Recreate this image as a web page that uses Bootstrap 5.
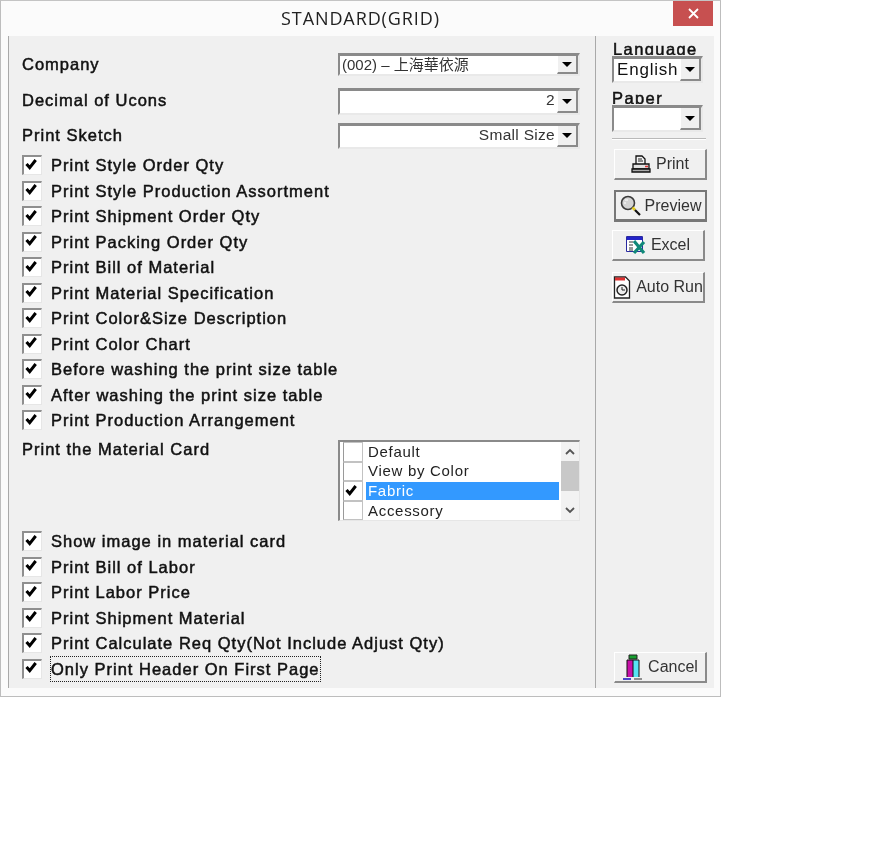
<!DOCTYPE html>
<html lang="en">

<head>
    <meta charset="UTF-8">
    <meta name="viewport" content="width=device-width, initial-scale=1.0">
    <link href="https://cdn.jsdelivr.net/npm/bootstrap@5.3.3/dist/css/bootstrap.min.css" rel="stylesheet">
    <title>STANDARD(GRID)</title>

    <style>
        body {
            background: #fff;
            color: #111;
            font-family: "Liberation Sans", "Noto Sans CJK TC", sans-serif;
            font-size: 16px;
        }

        .dlg-window {
            width: 721px;
            height: 697px;
            border: 1px solid #bdbdbd;
            border-top-color: #c4c4c4;
            background: #fbfbfb;
            filter: blur(.3px);
        }

        .dlg-title {
            height: 35px;
            font-family: "Open Sans", sans-serif;
            font-size: 18px;
            letter-spacing: .9px;
            line-height: 24px;
            color: #222;
            padding-top: 5px;
        }

        .dlg-close {
            top: 0;
            right: 7px;
            width: 40px;
            height: 25px;
            background: #c75050;
        }

        .dlg-panel {
            margin: 0 6px 0 7px;
            height: 652px;
            background: #f0f0f0;
            border-left: 1px solid #a9a9a9;
        }

        .dlg-main {
            width: 587px;
            border-right: 1px solid #a9a9a9;
            padding: 17px 15px 0 13px;
            flex: none;
        }

        .dlg-side {
            padding-top: 7px;
            padding-bottom: 5px;
            flex: 1;
            min-width: 0;
        }

        .ui-text {
            font-size: 16.5px;
            letter-spacing: 1px;
            -webkit-text-stroke: .5px #111;
            white-space: nowrap;
        }

        .field-row {
            display: flex;
            justify-content: space-between;
            align-items: center;
        }

        .row-company { height: 23px; }
        .row-decimal { height: 27px; margin-top: 12px; }
        .row-decimal .ui-text { margin-top: -2px; }
        .row-sketch { height: 26px; margin-top: 8px; margin-bottom: 3.25px; }
        .row-sketch .ui-text { margin-top: -2px; }

        .combo {
            width: 242px;
            height: 100%;
            display: flex;
            background: #fff;
            border: 2px solid #8a8a8a;
            border-right-color: #e9e9e9;
            border-bottom-color: #e9e9e9;
            border-top-width: 3px;
            overflow: hidden;
        }

        .combo-value {
            flex: 1;
            padding: 0 2px;
            line-height: 18px;
            color: #333;
            font-size: 15.5px;
            letter-spacing: .3px;
            white-space: nowrap;
        }

        .combo-value.cjk-value {
            font-size: 15px;
            letter-spacing: 0;
        }

        .combo-arrow {
            width: 21px;
            flex: none;
            background: #f0f0f0;
            border-right: 2px solid #8a8a8a;
            border-bottom: 2px solid #8a8a8a;
            border-left: 1px solid #fff;
            display: flex;
            align-items: center;
            justify-content: center;
        }

        .combo-arrow::before {
            content: "";
            border-left: 5px solid transparent;
            border-right: 5px solid transparent;
            border-top: 5px solid #000;
        }

        .tick-row {
            height: 25.5px;
            display: flex;
            align-items: center;
            gap: 9px;
        }

        .tick-row .ui-text {
            margin-top: 1px;
        }

        .tick-box {
            width: 20px;
            height: 20px;
            flex: none;
            background: #fff;
            border-top: 2px solid #8f8f8f;
            border-left: 2px solid #8f8f8f;
            border-right: 1px solid #e6e6e6;
            border-bottom: 1px solid #e6e6e6;
            display: flex;
            align-items: center;
            justify-content: center;
        }

        .tick-box svg {
            width: 12px;
            height: 11px;
            margin: -3px 3px 0 0;
        }

        .focus-label {
            outline: 1px dotted #222;
            outline-offset: 0;
        }

        .row-material {
            height: 81px;
            margin-top: 7.25px;
            margin-bottom: 7.25px;
            align-items: flex-start;
        }

        .row-material .ui-text {
            line-height: 18px;
        }

        .material-list {
            width: 242px;
            height: 81px;
            display: flex;
            background: #fff;
            border-top: 2px solid #8a8a8a;
            border-left: 2px solid #8a8a8a;
            border-right: 1px solid #e6e6e6;
            border-bottom: 1px solid #e6e6e6;
            overflow: hidden;
        }

        .material-items {
            flex: 1;
            padding-left: 3px;
        }

        .material-item {
            height: 19.6px;
            display: flex;
            align-items: center;
            gap: 3px;
            color: #222;
            font-size: 15px;
            letter-spacing: .7px;
        }

        .material-check {
            width: 20px;
            height: 100%;
            flex: none;
            border: 1px solid #c2c2c2;
            border-left: 1px solid #9a9a9a;
            display: flex;
            align-items: center;
            justify-content: center;
        }

        .material-check svg {
            width: 12px;
            height: 11px;
            margin-right: 4px;
        }

        .material-name {
            flex: 1;
            height: 18px;
            line-height: 18px;
            padding-left: 2px;
        }

        .material-name.picked {
            background: #3399ff;
            color: #fff;
        }

        .material-scroll {
            width: 18px;
            margin-left: 2px;
            background: #f2f2f2;
            flex: none;
            display: flex;
            flex-direction: column;
            justify-content: space-between;
            align-items: stretch;
        }

        .scroll-thumb {
            height: 31px;
            margin-top: -1px;
            margin-bottom: 9px;
            background: #c8c8c8;
        }

        .scroll-end {
            height: 20px;
            display: flex;
            align-items: center;
            justify-content: center;
        }

        .scroll-end svg {
            width: 10px;
            height: 7px;
        }

        .side-label {
            height: 12px;
            line-height: 12px;
            font-size: 16.5px;
            letter-spacing: 1.4px;
            -webkit-text-stroke: .5px #111;
        }

        .label-lang { margin-left: 17px; }
        .label-paper { margin-left: 16px; margin-top: 9px; }

        /* covers the label descenders, they are cut off in the dialog too */
        .mini-combo {
            position: relative;
            margin-left: 16px;
            margin-top: 1px;
            width: 91px;
            height: 27px;
            flex: none;
            box-shadow: 0 -1px 0 #f0f0f0;
        }

        .mini-combo .combo-value {
            font-size: 17px;
            letter-spacing: .8px;
            color: #111;
            padding-left: 3px;
            line-height: 22px;
        }

        .side-rule {
            height: 2px;
            margin: 6px 8px 9px 16px;
            background: #b9b9b9;
            border-bottom: 1px solid #fff;
        }

        .tool-btn {
            display: flex;
            align-items: center;
            justify-content: center;
            gap: 5px;
            width: 93px;
            height: 31px;
            flex: none;
            padding: 0;
            font-size: 16px;
            color: #333;
            white-space: nowrap;
            overflow: hidden;
            background: #f0f0f0;
            border-radius: 0;
            border-top: 1px solid #fff;
            border-left: 1px solid #fff;
            border-right: 2px solid #8a8a8a;
            border-bottom: 2px solid #8a8a8a;
        }

        .tool-btn svg {
            flex: none;
        }

        .btn-preview {
            border: 2px solid #777;
            border-bottom-width: 3px;
            height: 32px;
            gap: 4px;
        }

        .btn-offset-a { margin-left: 18px; }
        .btn-offset-b { margin-left: 16px; }
        .gap-a { margin-bottom: 10px; }
        .gap-b { margin-bottom: 8px; }
        .gap-c { margin-bottom: 11px; }
    </style>

</head>

<body class="m-0">
    <div class="dlg-window position-relative">
        <div class="dlg-title text-center">STANDARD(GRID)</div>
        <div class="dlg-close position-absolute d-flex align-items-center justify-content-center">
            <svg width="11" height="11" viewBox="0 0 11 11">
                <path d="M1 1l9 9M10 1l-9 9" stroke="#fff" stroke-width="1.8" fill="none"/>
            </svg>
        </div>

        <div class="dlg-panel d-flex">
            <div class="dlg-main">
                <div class="field-row row-company">
                    <span class="ui-text">Company</span>
                    <div class="combo">
                        <div class="combo-value cjk-value">(002) &#8211; 上海華依源</div>
                        <div class="combo-arrow"></div>
                    </div>
                </div>
                <div class="field-row row-decimal">
                    <span class="ui-text">Decimal of Ucons</span>
                    <div class="combo">
                        <div class="combo-value text-end">2</div>
                        <div class="combo-arrow"></div>
                    </div>
                </div>
                <div class="field-row row-sketch">
                    <span class="ui-text">Print Sketch</span>
                    <div class="combo">
                        <div class="combo-value text-end">Small Size</div>
                        <div class="combo-arrow"></div>
                    </div>
                </div>

                <div id="topTicks"></div>

                <div class="field-row row-material">
                    <span class="ui-text">Print the Material Card</span>
                    <div class="material-list">
                        <div class="material-items" id="materialItems"></div>
                        <div class="material-scroll">
                            <div class="scroll-end">
                                <svg viewBox="0 0 10 7"><path d="M1 6l4-4 4 4" stroke="#555" stroke-width="1.8" fill="none"/></svg>
                            </div>
                            <div class="scroll-thumb"></div>
                            <div class="scroll-end">
                                <svg viewBox="0 0 10 7"><path d="M1 1l4 4 4-4" stroke="#555" stroke-width="1.8" fill="none"/></svg>
                            </div>
                        </div>
                    </div>
                </div>

                <div id="bottomTicks"></div>
            </div>

            <div class="dlg-side d-flex flex-column">
                <div class="side-label label-lang">Language</div>
                <div class="combo mini-combo">
                    <div class="combo-value">English</div>
                    <div class="combo-arrow"></div>
                </div>
                <div class="side-label label-paper">Paper</div>
                <div class="combo mini-combo">
                    <div class="combo-value"></div>
                    <div class="combo-arrow"></div>
                </div>
                <div class="side-rule"></div>

                <button type="button" class="btn tool-btn btn-offset-a gap-a">
                    <svg width="20" height="18" viewBox="0 0 20 18">
                        <path d="M5 1h6l3 3v6H5z" fill="#f4f4f4" stroke="#111" stroke-width="1.3"/>
                        <path d="M7 4h4M7 6h5" stroke="#222"/>
                        <path d="M2 9h16v5H2z" fill="#e2e2e2" stroke="#111" stroke-width="1.3"/>
                        <path d="M1 14h18v3H1z" fill="#aaa" stroke="#111" stroke-width="1.3"/>
                        <path d="M14 11.5h3" stroke="#d33" stroke-width="1.5"/>
                    </svg>
                    <span>Print</span>
                </button>
                <button type="button" class="btn tool-btn btn-preview btn-offset-a gap-b">
                    <svg width="21" height="21" viewBox="0 0 21 21">
                        <circle cx="8" cy="8" r="6.5" fill="#d4d4d4" stroke="#3a3a3a" stroke-width="1.6"/>
                        <path d="M5 5h3M4 8h2" stroke="#fff" stroke-width="1.2"/>
                        <path d="M12.5 12.5l2.5 2.5" stroke="#e2cb20" stroke-width="2.6"/>
                        <path d="M15 15l5 5" stroke="#111" stroke-width="2.2"/>
                    </svg>
                    <span>Preview</span>
                </button>
                <button type="button" class="btn tool-btn btn-offset-b gap-c">
                    <svg width="20" height="19" viewBox="0 0 20 19">
                        <path d="M.5.5h16v15H.5z" fill="#fff" stroke="#2a2aa0"/>
                        <path d="M1 1h15v3H1z" fill="#2424c8"/>
                        <path d="M3 6h4M3 9h4M3 12h4M3 14h4" stroke="#333"/>
                        <path d="M8 5l10 12M18 6L8 17" stroke="#108878" stroke-width="3.2"/>
                    </svg>
                    <span>Excel</span>
                </button>
                <button type="button" class="btn tool-btn btn-offset-b">
                    <svg width="18" height="23" viewBox="0 0 18 23">
                        <path d="M1.5 1h11l4 4v17h-15z" fill="#fff" stroke="#222" stroke-width="1.3"/>
                        <path d="M2 1.5h10v3H2z" fill="#dd3030"/>
                        <circle cx="9" cy="14" r="5" fill="#eee" stroke="#222" stroke-width="1.5"/>
                        <path d="M9 11v3h3" stroke="#222" fill="none"/>
                    </svg>
                    <span>Auto Run</span>
                </button>

                <button type="button" class="btn tool-btn btn-offset-a mt-auto" id="cancelBtn">
                    <svg width="21" height="27" viewBox="0 0 21 27">
                        <path d="M7 1h8v4H7z" fill="#18a030" stroke="#222"/>
                        <path d="M5 6h6v17H5z" fill="#c810a8"/>
                        <path d="M11 6h6v17h-6z" fill="#58e4f4"/>
                        <path d="M5 6h12M5 6v17M11 6v17M17 6v17" stroke="#111" fill="none"/>
                        <path d="M1 25h8" stroke="#2020c0" stroke-width="1.6"/>
                        <path d="M12 25h8" stroke="#777" stroke-width="1.6"/>
                    </svg>
                    <span>Cancel</span>
                </button>
            </div>
        </div>
    </div>

    <script src="https://cdn.jsdelivr.net/npm/bootstrap@5.3.3/dist/js/bootstrap.bundle.min.js"></script>
    <script>
        const tickIcon = '<svg viewBox="0 0 12 11"><path d="M1.5 5l3.2 3.6 6-7.6" stroke="#000" stroke-width="3" fill="none"/></svg>';

        const topLabels = [
            'Print Style Order Qty',
            'Print Style Production Assortment',
            'Print Shipment Order Qty',
            'Print Packing Order Qty',
            'Print Bill of Material',
            'Print Material Specification',
            'Print Color&amp;Size Description',
            'Print Color Chart',
            'Before washing the print size table',
            'After washing the print size table',
            'Print Production Arrangement'
        ];

        const bottomLabels = [
            'Show image in material card',
            'Print Bill of Labor',
            'Print Labor Price',
            'Print Shipment Material',
            'Print Calculate Req Qty(Not Include Adjust Qty)',
            'Only Print Header On First Page'
        ];

        const materials = ['Default', 'View by Color', 'Fabric', 'Accessory', ''];

        function tickRow(label, focused) {
            return `
                <div class="tick-row">
                    <span class="tick-box">${tickIcon}</span>
                    <span class="ui-text${focused ? ' focus-label' : ''}">${label}</span>
                </div>
            `;
        }

        document.getElementById('topTicks').innerHTML = topLabels.map(l => tickRow(l, false)).join('');
        document.getElementById('bottomTicks').innerHTML = bottomLabels
            .map((l, i) => tickRow(l, i === bottomLabels.length - 1)).join('');

        document.getElementById('materialItems').innerHTML = materials.map(m => `
            <div class="material-item">
                <span class="material-check">${m === 'Fabric' ? tickIcon : ''}</span>
                <span class="material-name${m === 'Fabric' ? ' picked' : ''}">${m}</span>
            </div>
        `).join('');
    </script>
</body>

</html>
